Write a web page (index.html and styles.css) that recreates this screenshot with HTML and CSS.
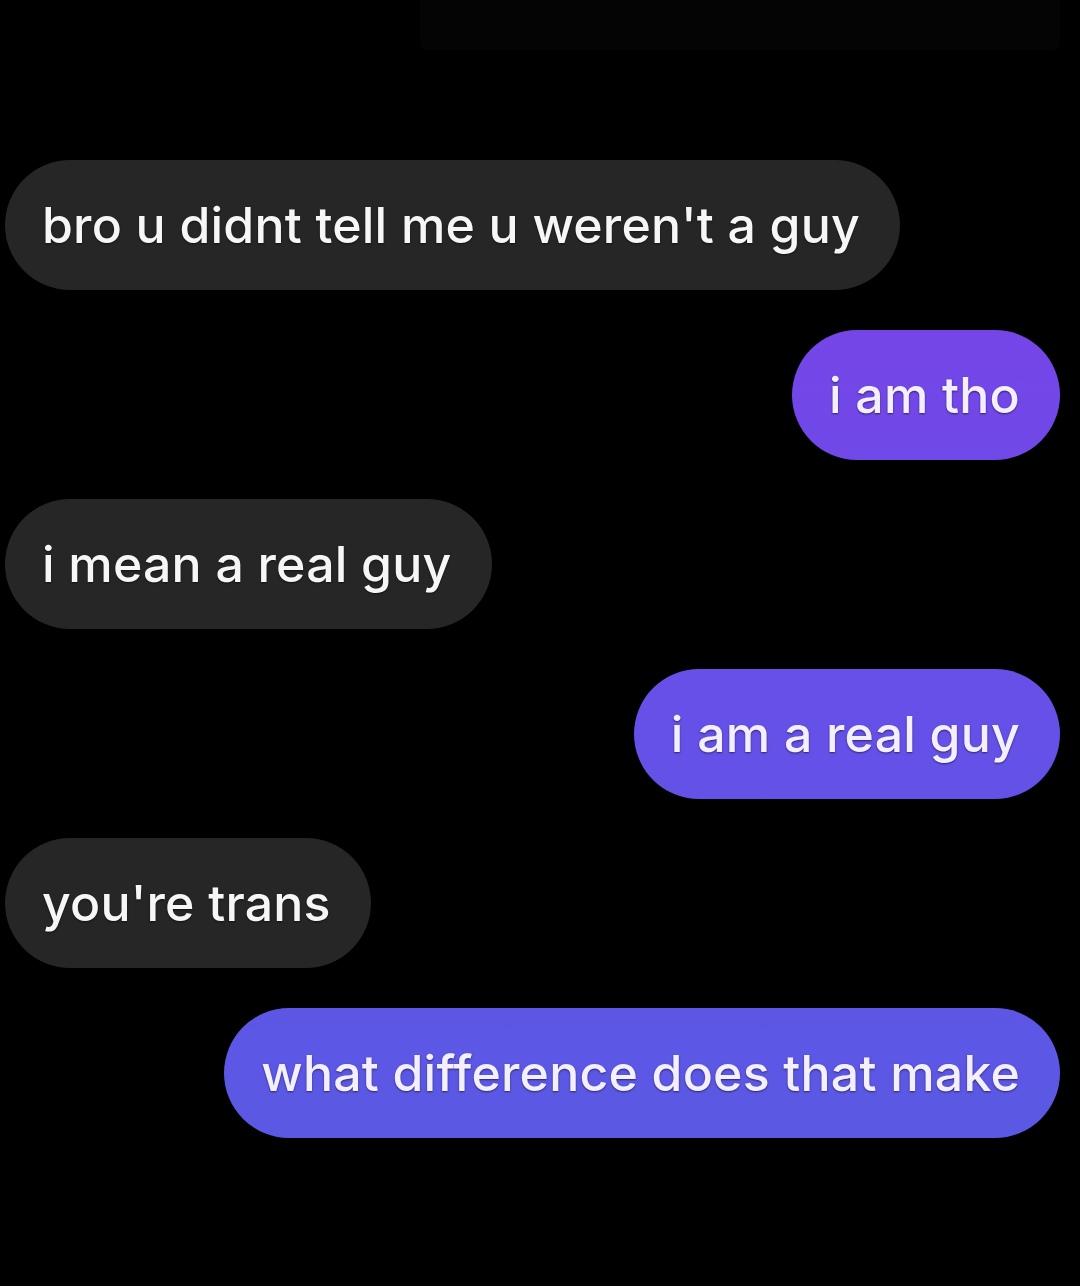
FILE: index.html
```html
<html>
<head>
	<link rel="stylesheet" href="styles.css">
</head>
<body>
	<div class="statusbar"></div>

	<div class="thread">
		<div class="msg them">bro u didnt tell me u weren't a guy</div>
		<div class="msg me">i am tho</div>
		<div class="msg them">i mean a real guy</div>
		<div class="msg me">i am a real guy</div>
		<div class="msg them">you're trans</div>
		<div class="msg me">what difference does that make</div>
	</div>
</body>
</html>
```

FILE: styles.css
```css
body{margin:0; background-color:#000; font-family:Inter, "Liberation Sans", sans-serif; height:1286px; overflow:hidden;}
.statusbar{height:50px; margin-left:420px; margin-right:20px; background-color:#040404; border-radius:0 0 8px 8px;}
.thread{display:flex; flex-direction:column; gap:39.6px; padding:110px 20px 0 5px;}
.msg{height:130px; border-radius:65px; padding:0 40px 0 37px; display:flex; align-items:center; font-size:50px; font-weight:500; letter-spacing:0.2px; color:#f6f6f6; white-space:nowrap; box-sizing:border-box; text-shadow:0 1px 2px rgba(0,0,0,.55);}
.them{align-self:flex-start; background-color:#262626;}
.me{align-self:flex-end; color:#f4efff; background:linear-gradient(180deg, #7c3fea 0px, #7545e8 330px, #6650e8 700px, #5b58e4 1100px, #5a5ae3 1286px) fixed;}
```
